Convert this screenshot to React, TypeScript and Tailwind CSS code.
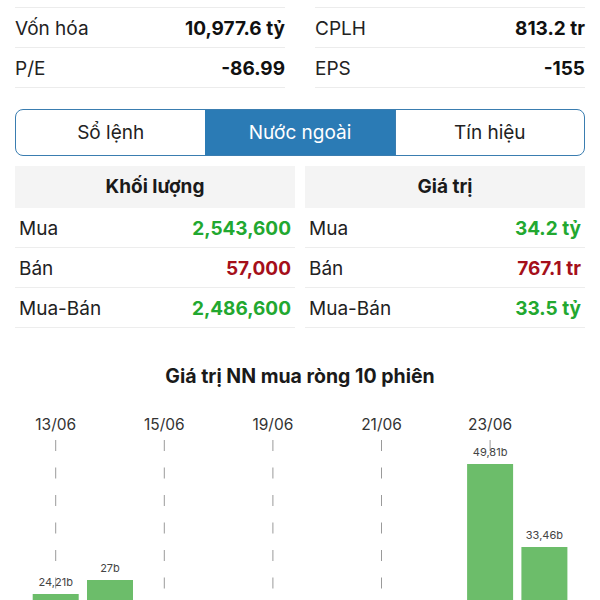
import React from "react";

const font = { fontFamily: "Inter, 'Noto Sans', 'Liberation Sans', sans-serif" };

function StatRow({ label, value }: { label: string; value: string }) {
  return (
    <div className="flex h-[40px] items-center justify-between border-b border-[#ececec] pt-[3px] text-[19px]">
      <span className="text-[#222]">{label}</span>
      <span className="font-bold text-[#111]">{value}</span>
    </div>
  );
}

function TableCol({
  title,
  rows,
}: {
  title: string;
  rows: { label: string; value: string; color: string }[];
}) {
  return (
    <div className="flex flex-col">
      <div className="flex h-[42px] items-center justify-center bg-[#f4f4f4] text-[19px] font-bold text-[#1a1a1a]">
        {title}
      </div>
      {rows.map((r) => (
        <div
          key={r.label}
          className="flex h-[40px] items-center justify-between border-b border-[#ededed] px-[4px] pt-[3px] text-[19px]"
        >
          <span className="text-[#222]">{r.label}</span>
          <span className={`font-bold ${r.color}`}>{r.value}</span>
        </div>
      ))}
    </div>
  );
}

const bars: { top: number | null; label: string }[] = [
  { top: 594, label: "24,21b" },
  { top: 580, label: "27b" },
  { top: null, label: "" },
  { top: null, label: "" },
  { top: null, label: "" },
  { top: null, label: "" },
  { top: null, label: "" },
  { top: null, label: "" },
  { top: 464, label: "49,81b" },
  { top: 547, label: "33,46b" },
];

const dates = ["13/06", "15/06", "19/06", "21/06", "23/06"];

function Chart() {
  const oy = 388;
  const pitch = 54.3;
  const x0 = 32.7;
  const w = 46;
  return (
    <svg width="600" height="212" viewBox="0 0 600 212" className="block">
      {dates.map((d, k) => {
        const cx = x0 + k * 2 * pitch + w / 2;
        const dashes = [];
        for (let y = 52; y < 212; y += 27.5) {
          dashes.push(
            <line key={y} x1={cx} x2={cx} y1={y} y2={y + 11} stroke="#9a9a9a" strokeWidth="1" />
          );
        }
        return (
          <g key={d}>
            <text
              x={cx}
              y={36}
              textAnchor="middle"
              dominantBaseline="central"
              fontSize="15.5"
              fill="#333"
              style={font}
            >
              {d}
            </text>
            {dashes}
          </g>
        );
      })}
      {bars.map((b, i) =>
        b.top === null ? null : (
          <g key={i}>
            <rect x={x0 + i * pitch} y={b.top - oy} width={w} height={212} fill="#6cbd6a" />
            <text
              x={x0 + i * pitch + w / 2}
              y={b.top - oy - 12}
              textAnchor="middle"
              dominantBaseline="central"
              fontSize="11"
              fill="#444"
              style={font}
            >
              {b.label}
            </text>
          </g>
        )
      )}
    </svg>
  );
}

export default function App() {
  return (
    <div className="h-[600px] w-[600px] overflow-hidden bg-white" style={font}>
      <div className="grid grid-cols-2 gap-x-[30px] px-[15px]">
        <div className="flex flex-col">
          <div className="h-[8px] border-b border-[#ececec]" />
          <StatRow label="Vốn hóa" value="10,977.6 tỷ" />
          <StatRow label="P/E" value="-86.99" />
        </div>
        <div className="flex flex-col">
          <div className="h-[8px] border-b border-[#ececec]" />
          <StatRow label="CPLH" value="813.2 tr" />
          <StatRow label="EPS" value="-155" />
        </div>
      </div>

      <div className="mx-[15px] mt-[21px] grid h-[47px] grid-cols-3 overflow-hidden rounded-[8px] border border-[#3a7db0] text-[19px]">
        <div className="flex items-center justify-center pt-[2px] text-[#222]">Sổ lệnh</div>
        <div className="flex items-center justify-center bg-[#2b7bb5] pt-[2px] text-white">Nước ngoài</div>
        <div className="flex items-center justify-center border-l border-[#3a7db0] pt-[2px] text-[#222]">Tín hiệu</div>
      </div>

      <div className="mx-[15px] mt-[10px] grid grid-cols-2 gap-x-[10px]">
        <TableCol
          title="Khối lượng"
          rows={[
            { label: "Mua", value: "2,543,600", color: "text-[#22a830]" },
            { label: "Bán", value: "57,000", color: "text-[#a50f1a]" },
            { label: "Mua-Bán", value: "2,486,600", color: "text-[#22a830]" },
          ]}
        />
        <TableCol
          title="Giá trị"
          rows={[
            { label: "Mua", value: "34.2 tỷ", color: "text-[#22a830]" },
            { label: "Bán", value: "767.1 tr", color: "text-[#a50f1a]" },
            { label: "Mua-Bán", value: "33.5 tỷ", color: "text-[#22a830]" },
          ]}
        />
      </div>

      <div className="mt-[36px] h-[24px] text-center text-[19.5px] leading-[24px] font-bold text-[#1a1a1a]">
        Giá trị NN mua ròng 10 phiên
      </div>
      <Chart />
    </div>
  );
}
